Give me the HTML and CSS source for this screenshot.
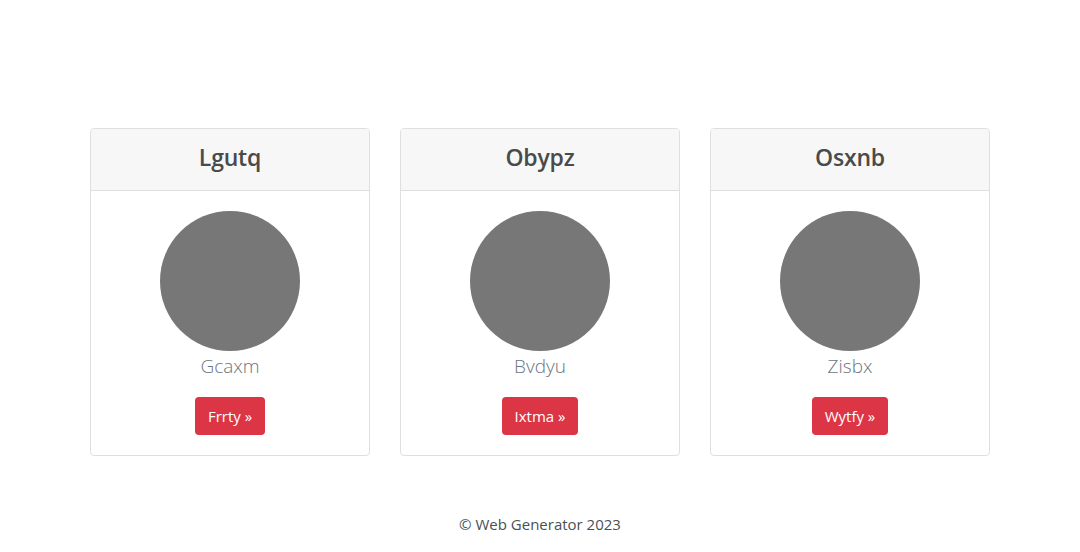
FILE: index.html
```html
<!DOCTYPE html>
<html>
<head>
<meta charset="utf-8">
<link rel="stylesheet" href="styles.css">
</head>
<body>
<main class="main">
  <div class="cards">
    <div class="card">
      <div class="card-header"><h3 class="title">Lgutq</h3></div>
      <div class="card-body">
        <div class="avatar"></div>
        <p class="name">Gcaxm</p>
        <a class="btn">Frrty &raquo;</a>
      </div>
    </div>
    <div class="card">
      <div class="card-header"><h3 class="title">Obypz</h3></div>
      <div class="card-body">
        <div class="avatar"></div>
        <p class="name">Bvdyu</p>
        <a class="btn">Ixtma &raquo;</a>
      </div>
    </div>
    <div class="card">
      <div class="card-header"><h3 class="title">Osxnb</h3></div>
      <div class="card-body">
        <div class="avatar"></div>
        <p class="name">Zisbx</p>
        <a class="btn">Wytfy &raquo;</a>
      </div>
    </div>
  </div>
</main>
<footer class="footer">&copy; Web Generator 2023</footer>
</body>
</html>
```

FILE: styles.css
```css
html, body {
  margin: 0;
  padding: 0;
  background: #fff;
}
body {
  font-family: "Open Sans", "Noto Sans", sans-serif;
  color: #495057;
  font-size: 16px;
}
.main {
  padding-top: 128px;
}
.cards {
  display: flex;
  justify-content: center;
  gap: 30px;
}
.card {
  width: 278px;
  border: 1px solid #dfdfdf;
  border-radius: 4px;
  background: #fff;
  overflow: hidden;
}
.card-header {
  height: 62px;
  box-sizing: border-box;
  padding-bottom: 6px;
  background: #f7f7f7;
  border-bottom: 1px solid #dfdfdf;
  display: flex;
  align-items: center;
  justify-content: center;
}
.title {
  margin: 0;
  font-size: 23px;
  font-weight: 600;
  color: #4a4a4a;
  letter-spacing: -0.2px;
}
.card-body {
  padding: 20px;
  display: flex;
  flex-direction: column;
  align-items: center;
}
.avatar {
  width: 140px;
  height: 140px;
  border-radius: 50%;
  background: #777777;
}
.name {
  margin: 0 0 16px;
  font-size: 19px;
  line-height: 30px;
  font-weight: 300;
  color: #6c757d;
}
.btn {
  display: inline-block;
  background: #dc3545;
  color: #fff;
  border-radius: 4px;
  padding: 0 13px;
  height: 38px;
  line-height: 38px;
  font-size: 15px;
}
.footer {
  margin-top: 56px;
  text-align: center;
  font-size: 15px;
  line-height: 24px;
  color: #495057;
}
```
